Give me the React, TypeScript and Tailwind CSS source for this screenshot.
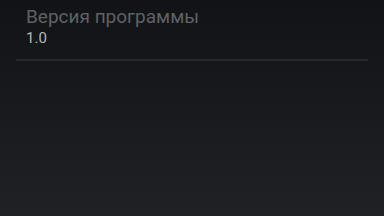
export default function App() {
  return (
    <div
      className="flex h-[216px] w-[384px] flex-col bg-gradient-to-b from-[#111316] to-[#1f2125]"
      style={{ fontFamily: "Roboto, 'Noto Sans', sans-serif" }}
    >
      <div className="mx-4 border-b-2 border-[#272a2d] pt-[6px] pb-[13px] pl-[10px]">
        <p className="text-[19px] leading-[22px] text-[#5e6265]">Версия программы</p>
        <p className="mt-[2px] text-[15px] leading-[16px] text-[#b8b9ba]">1.0</p>
      </div>
    </div>
  );
}
